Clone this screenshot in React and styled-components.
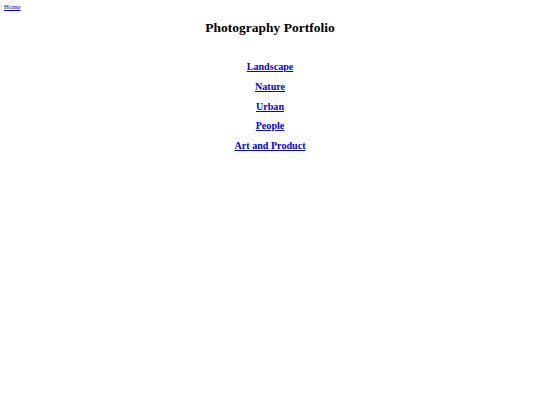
import React from 'react'
import styled, { createGlobalStyle } from 'styled-components'

const Global = createGlobalStyle`
  html, body { margin: 0; padding: 0; background: #fff; }
  body { font-family: "Liberation Serif", "Times New Roman", serif; color: #000; }
`

const Page = styled.div`
  padding: 0 4px;
`

const TopBar = styled.div`
  display: flex;
  height: 14px;
  align-items: center;
`

const HomeLink = styled.a`
  font-size: 6.8px;
  line-height: 8px;
  color: #0000ee;
  text-decoration: underline;
`

const Title = styled.h1`
  margin: 6px 0 0;
  font-size: 13.5px;
  font-weight: bold;
  text-align: center;
  line-height: 16px;
`

const Nav = styled.nav`
  display: flex;
  flex-direction: column;
  align-items: center;
  gap: 7.75px;
  margin-top: 25px;
`

const NavLink = styled.a`
  font-size: 10.1px;
  font-weight: bold;
  color: #0000ee;
  text-decoration: underline;
  line-height: 12px;
`

const links = ['Landscape', 'Nature', 'Urban', 'People', 'Art and Product']

export default function App() {
  return (
    <>
      <Global />
      <Page>
        <TopBar>
          <HomeLink href="#">Home</HomeLink>
        </TopBar>
        <Title>Photography Portfolio</Title>
        <Nav>
          {links.map(l => (
            <NavLink key={l} href="#">{l}</NavLink>
          ))}
        </Nav>
      </Page>
    </>
  )
}
